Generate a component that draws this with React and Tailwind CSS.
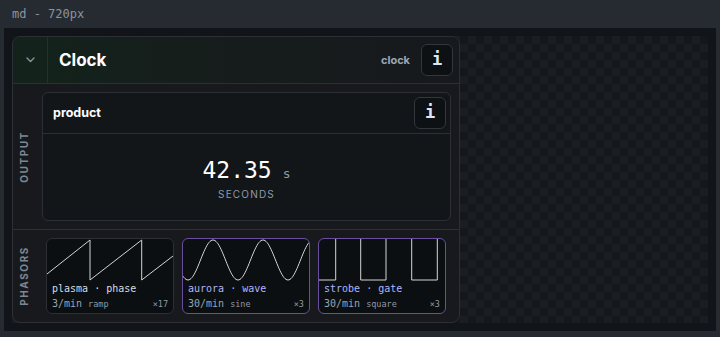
const mono = "font-['DejaVu_Sans_Mono',monospace]";

function sinePath() {
  const pts = [];
  for (let x = 0; x <= 126; x += 1) {
    const y = 21 + 20 * Math.cos((2 * Math.PI * (x - 5)) / 50);
    pts.push(`${x},${y.toFixed(2)}`);
  }
  return "M" + pts.join(" L");
}

const waves = {
  ramp: "M0,35 L43,1 L43,41 L94.7,1 L94.7,41 L126,17",
  sine: sinePath(),
  square:
    "M0,41 L16.7,41 L16.7,-1 L41.7,-1 L41.7,41 L67,41 L67,-1 L92.7,-1 L92.7,41 L118.3,41 L118.3,-1 L126,-1",
};

const phasors = [
  { name: "plasma · phase", rate: "3/min", kind: "ramp", count: "×17", wave: "ramp", active: false },
  { name: "aurora · wave", rate: "30/min", kind: "sine", count: "×3", wave: "sine", active: true },
  { name: "strobe · gate", rate: "30/min", kind: "square", count: "×3", wave: "square", active: true },
];

export default function App() {
  return (
    <div className="w-[720px] h-[337px] bg-[#262b32] flex flex-col font-['Inter',sans-serif]">
      <div className={`h-7 flex items-center px-3 text-xs text-[#8b949e] ${mono}`}>md - 720px</div>
      <div className="flex-1 min-h-0 mx-1 mb-[6px] bg-[#111418] p-2 flex">
        <div className="flex-1 flex bg-[conic-gradient(#1a1d22_25%,#14171b_0_50%,#1a1d22_0_75%,#14171b_0)] bg-[length:16px_16px]">
          <ClockCard />
        </div>
      </div>
    </div>
  );
}

function InfoButton() {
  return (
    <button className={`w-8 h-8 shrink-0 rounded-md border border-[#32363d] bg-[#0e1114] flex items-center justify-center text-[17px] font-bold text-[#dce6f2] ${mono}`}>
      i
    </button>
  );
}

function SideLabel({ children }) {
  return (
    <span className="[writing-mode:vertical-rl] rotate-180 text-[10px] font-bold tracking-[0.16em] text-[#7d8896]">
      {children}
    </span>
  );
}

function ClockCard() {
  return (
    <div className="w-[448px] h-full rounded-lg border border-[#2c3036] bg-[#17191d] flex flex-col overflow-hidden">
      <div className="h-[47px] shrink-0 flex items-center border-b border-[#2c3036] bg-gradient-to-r from-[#13231b] via-[#161c1b] to-[#17191d]">
        <div className="w-[35px] h-full flex items-center justify-center border-r border-[#283029]">
          <svg width="9" height="6" viewBox="0 0 9 6" fill="none">
            <path d="M1 1L4.5 4.5L8 1" stroke="#8b949e" strokeWidth="1.4" strokeLinecap="round" strokeLinejoin="round" />
          </svg>
        </div>
        <div className="pl-[11px] pt-[1px] text-[17px] font-bold text-white">Clock</div>
        <div className="ml-auto mr-[11px] text-[11px] font-bold text-[#9aa6b4]">clock</div>
        <div className="mr-[6px]">
          <InfoButton />
        </div>
      </div>

      <div className="flex py-2 border-b border-[#2c3036] shrink-0">
        <div className="w-[29px] flex items-center justify-start pl-[4px]">
          <SideLabel>OUTPUT</SideLabel>
        </div>
        <div className="flex-1 mr-2 h-[129px] rounded-md border border-[#2c3036] bg-[#131619] flex flex-col">
          <div className="h-[41px] shrink-0 flex items-center border-b border-[#2c3036] pl-[10px] pr-1">
            <span className="text-[12.5px] font-bold text-white">product</span>
            <div className="ml-auto">
              <InfoButton />
            </div>
          </div>
          <div className="flex-1 flex flex-col items-center justify-center pt-[3px]">
            <div className="flex items-baseline leading-[26px]">
              <span className={`text-[23px] font-medium text-white ${mono}`}>42.35</span>
              <span className={`ml-[11px] text-[13px] text-[#8f99a6] ${mono}`}>s</span>
            </div>
            <div className="text-[10px] leading-[14px] tracking-[0.12em] text-[#8f99a6]">SECONDS</div>
          </div>
        </div>
      </div>

      <div className="flex-1 flex py-2">
        <div className="w-[33px] flex items-center justify-start pl-[4px]">
          <SideLabel>PHASORS</SideLabel>
        </div>
        <div className="flex-1 grid grid-cols-3 gap-2 pr-[13px]">
          {phasors.map((p) => (
            <PhasorCard key={p.name} {...p} />
          ))}
        </div>
      </div>
    </div>
  );
}

function PhasorCard({ name, rate, kind, count, wave, active }) {
  return (
    <div
      className={`rounded-md border overflow-hidden bg-[#0c0f12] flex flex-col ${
        active ? "border-[#6a4f9e]" : "border-[#2b2f36]"
      }`}
    >
      <svg className="block w-full h-[42px] shrink-0" viewBox="0 0 126 42" preserveAspectRatio="none">
        <path d={waves[wave]} fill="none" stroke="#d4d4d4" strokeWidth="1" />
      </svg>
      <div className={`px-[5px] ${mono}`}>
        <div className={`text-[10px] leading-[15px] ${active ? "text-[#aeb5ff]" : "text-[#d5dce6]"}`}>{name}</div>
        <div className="flex items-baseline leading-[15px]">
          <span className="text-[10px] text-[#9aa4ae]">{rate}</span>
          <span className="ml-[6px] text-[8.5px] text-[#8f99a3]">{kind}</span>
          <span className="ml-auto text-[8.5px] text-[#8f99a3]">{count}</span>
        </div>
      </div>
    </div>
  );
}
